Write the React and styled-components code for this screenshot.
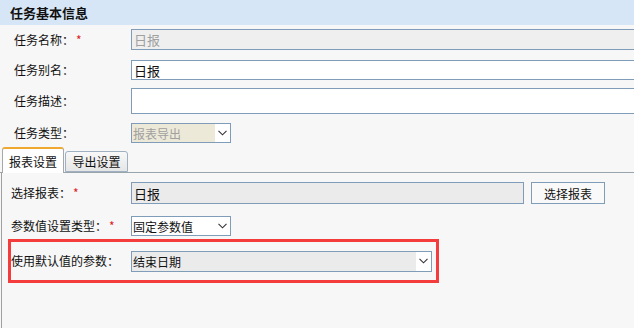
import React from 'react'
import styled, { createGlobalStyle } from 'styled-components'

const Global = createGlobalStyle`
  html, body {
    margin: 0;
    padding: 0;
    background: #f7f7f7;
    overflow: hidden;
  }
  body {
    font-family: "Noto Sans CJK SC", "Noto Sans", sans-serif;
    font-size: 12px;
    color: #111;
  }
`

const Page = styled.div`
  width: 634px;
  height: 328px;
  overflow: hidden;
  background: #f7f7f7;
`

const Header = styled.div`
  height: 25px;
  line-height: 25px;
  padding-left: 10px;
  background: #d6e6f6;
  font-weight: bold;
  font-size: 13px;
  color: #111;
`

const Section = styled.div`
  padding-left: ${p => p.$pad || 14}px;
`

const Row = styled.div`
  display: grid;
  grid-template-columns: ${p => p.$label || 117}px 1fr;
  align-items: center;
  margin-top: ${p => p.$mt || 0}px;
`

const Label = styled.div`
  white-space: nowrap;
  line-height: 16px;
`

const Star = styled.span`
  color: #e02020;
  margin-left: 2px;
`

const Input = styled.div`
  box-sizing: border-box;
  width: ${p => p.$w || 520}px;
  height: ${p => p.$h || 20}px;
  border: 1px solid #7f9db9;
  background: ${p => p.$bg || '#fff'};
  color: ${p => p.$color || '#111'};
  font-size: 13px;
  padding-left: 2px;
  display: flex;
  align-items: center;
  white-space: nowrap;
  overflow: hidden;
`

const Select = styled.div`
  box-sizing: border-box;
  width: ${p => p.$w || 100}px;
  height: ${p => p.$h || 20}px;
  border: 1px solid #7f9db9;
  background: #fff;
  display: flex;
  align-items: stretch;
`

const SelectText = styled.div`
  flex: 1;
  background: ${p => p.$bg || '#fff'};
  color: ${p => p.$color || '#111'};
  display: flex;
  align-items: center;
  padding-left: 1px;
  white-space: nowrap;
`

const Arrow = styled.div`
  width: 15px;
  background: #fff;
  display: flex;
  align-items: center;
  justify-content: center;
`

const Chevron = () => (
  <svg width="9" height="6" viewBox="0 0 9 6">
    <polyline points="0.5,0.8 4.5,4.8 8.5,0.8" fill="none" stroke="#333" strokeWidth="1.1" />
  </svg>
)

const Tabs = styled.div`
  display: flex;
  align-items: flex-end;
  height: 25px;
  margin-top: 4px;
  border-bottom: 1px solid #9aa4ad;
`

const Tab = styled.div`
  box-sizing: border-box;
  height: ${p => (p.$active ? 26 : 21)}px;
  margin-bottom: ${p => (p.$active ? -1 : 0)}px;
  margin-left: ${p => (p.$active ? 2 : 1)}px;
  width: ${p => (p.$active ? 62 : 63)}px;
  border: 1px solid ${p => (p.$active ? '#a8a8a8' : '#9eb0c2')};
  border-top: ${p => (p.$active ? '2px solid #f0a830' : '1px solid #9eb0c2')};
  border-bottom: ${p => (p.$active ? 'none' : '1px solid #9eb0c2')};
  border-radius: 3px 3px 0 0;
  background: ${p => (p.$active ? '#fff' : 'linear-gradient(#f8f8f8, #e6e6e6)')};
  display: flex;
  align-items: center;
  justify-content: center;
  font-size: 12px;
`

const Panel = styled.div`
  border-left: 1px solid #a0a0a0;
  margin-left: 1px;
  height: 160px;
  padding-top: 9px;
  padding-left: 9px;
`

const Button = styled.div`
  box-sizing: border-box;
  width: 74px;
  height: 22px;
  border: 1px solid #7f9db9;
  background: #f9f9f9;
  display: flex;
  align-items: center;
  justify-content: center;
  margin-left: 7px;
`

const Inline = styled.div`
  display: flex;
  align-items: center;
`

const Highlight = styled.div`
  box-sizing: border-box;
  width: 431px;
  height: 44px;
  margin-top: 3px;
  margin-left: -3px;
  border: 3px solid #f43c3c;
  display: flex;
  align-items: center;
`

function App() {
  return (
    <Page>
      <Global />
      <Header>任务基本信息</Header>
      <Section>
        <Row $mt={4}>
          <Label>任务名称：<Star>*</Star></Label>
          <Input $h={21} $bg="#efefef" $color="#a0a0a0">日报</Input>
        </Row>
        <Row $mt={10}>
          <Label>任务别名：</Label>
          <Input>日报</Input>
        </Row>
        <Row $mt={8}>
          <Label>任务描述：</Label>
          <Input $h={26} />
        </Row>
        <Row $mt={9}>
          <Label>任务类型：</Label>
          <Select>
            <SelectText $bg="#ece9d8" $color="#a0a0a0">报表导出</SelectText>
            <Arrow><Chevron /></Arrow>
          </Select>
        </Row>
      </Section>
      <Tabs>
        <Tab $active>报表设置</Tab>
        <Tab>导出设置</Tab>
      </Tabs>
      <Panel>
        <Row $label={120}>
          <Label>选择报表：<Star>*</Star></Label>
          <Inline>
            <Input $w={393} $h={22} $bg="#ebebeb">日报</Input>
            <Button>选择报表</Button>
          </Inline>
        </Row>
        <Row $label={120} $mt={12}>
          <Label>参数值设置类型：<Star>*</Star></Label>
          <Select>
            <SelectText>固定参数值</SelectText>
            <Arrow><Chevron /></Arrow>
          </Select>
        </Row>
        <Highlight>
          <Row $label={120}>
            <Label>使用默认值的参数：</Label>
            <Select $w={301} $h={21}>
              <SelectText $bg="#ebebeb">结束日期</SelectText>
              <Arrow><Chevron /></Arrow>
            </Select>
          </Row>
        </Highlight>
      </Panel>
    </Page>
  )
}

export default App
